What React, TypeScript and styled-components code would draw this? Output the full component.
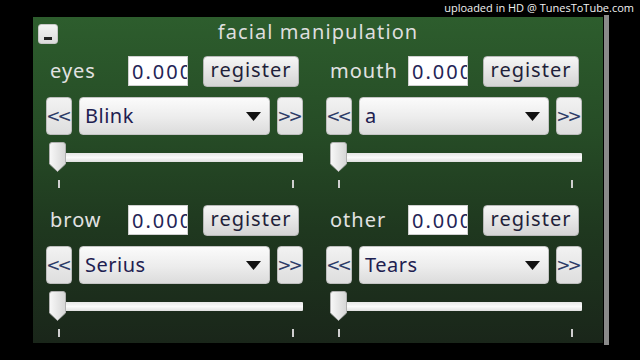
import React from 'react';
import styled, { createGlobalStyle } from 'styled-components';

const GlobalStyle = createGlobalStyle`
  html, body {
    margin: 0;
    padding: 0;
    background: #000;
  }
  body {
    font-family: "Noto Sans", "DejaVu Sans", sans-serif;
  }
`;

const Screen = styled.div`
  position: relative;
  width: 640px;
  height: 360px;
  background: #000;
  overflow: hidden;
  display: flex;
  align-items: flex-start;
  padding: 15px 0 0 33px;
  box-sizing: border-box;
`;

const Watermark = styled.div`
  position: absolute;
  top: 0;
  right: 6px;
  color: #f2f2f2;
  font-family: "Open Sans", "Noto Sans", sans-serif;
  font-size: 11px;
  line-height: 16px;
`;

const Panel = styled.div`
  margin-top: 2px;
  width: 570px;
  height: 326px;
  background: linear-gradient(#2d5d2d 0%, #264c26 35%, #1f381f 65%, #1a261a 100%);
  display: flex;
  flex-direction: column;
  box-sizing: border-box;
`;

const ScrollEdge = styled.div`
  width: 5px;
  height: 330px;
  margin-left: 1px;
  background: #8a8a8a;
`;

const TitleBar = styled.div`
  position: relative;
  height: 39px;
  display: flex;
  justify-content: center;
  align-items: flex-start;
`;

const Collapse = styled.button`
  position: absolute;
  left: 5px;
  top: 7px;
  width: 20px;
  height: 20px;
  padding: 0;
  border: 1px solid #c8c8c8;
  border-radius: 3px;
  background: linear-gradient(#f4f4f4, #dcdcdc);
  display: flex;
  justify-content: center;
  align-items: flex-start;

  &::after {
    content: '';
    margin-top: 12px;
    width: 8px;
    height: 3px;
    background: #222;
  }
`;

const Title = styled.div`
  margin-top: 2px;
  color: #dedede;
  font-size: 20px;
  line-height: 26px;
  letter-spacing: 1.1px;
`;

const Grid = styled.div`
  display: grid;
  grid-template-columns: 257px 256px;
  column-gap: 23px;
  row-gap: 17px;
  padding-left: 13px;
`;

const Section = styled.div`
  display: flex;
  flex-direction: column;
`;

const TopRow = styled.div`
  display: flex;
  align-items: center;
  height: 30px;
`;

const Label = styled.div`
  width: 78px;
  padding-left: 4px;
  color: #e2e2e2;
  font-size: 20px;
  line-height: 30px;
  letter-spacing: 1px;
`;

const ValueInput = styled.input`
  width: 60px;
  height: 30px;
  box-sizing: border-box;
  border: 1px solid #d0d0d0;
  background: #fff;
  color: #242456;
  font-family: "Noto Sans", "DejaVu Sans", sans-serif;
  font-size: 20px;
  letter-spacing: 2px;
  padding: 0 0 0 3px;
  outline: none;
`;

const RegisterButton = styled.button`
  margin-left: 15px;
  width: 96px;
  height: 31px;
  border: 1px solid #b8b8b8;
  border-radius: 4px;
  background: linear-gradient(#f6f6f6, #e2e2e2 60%, #d4d4d4);
  color: #1f1f3a;
  font-family: "Noto Sans", "DejaVu Sans", sans-serif;
  font-size: 20px;
  letter-spacing: 1px;
  line-height: 26px;
  padding: 0 0 2px;
`;

const ChooserRow = styled.div`
  margin-top: 11px;
  display: flex;
  gap: 7px;
  height: 38px;
`;

const StepButton = styled.button`
  width: 26px;
  height: 38px;
  padding: 0 3px 0 0;
  border: 1px solid #bdbdbd;
  border-radius: 4px;
  background: linear-gradient(#f2f2f2, #dedede);
  color: #2e3c68;
  font-family: "DejaVu Sans", sans-serif;
  font-size: 17px;
  letter-spacing: -3px;
  display: flex;
  justify-content: center;
  align-items: center;
`;

const Select = styled.div`
  flex: 1;
  height: 38px;
  box-sizing: border-box;
  border: 1px solid #c4c4c4;
  border-radius: 4px;
  background: linear-gradient(#fbfbfb, #ececec 55%, #dcdcdc);
  display: flex;
  align-items: center;
  padding: 0 8px 0 5px;
`;

const SelectText = styled.span`
  flex: 1;
  color: #1e2050;
  font-size: 20px;
  letter-spacing: 0.5px;
  line-height: 26px;
`;

const Caret = styled.svg`
  width: 15px;
  height: 9px;
`;

const Slider = styled.div`
  position: relative;
  margin-top: 7px;
  height: 30px;
`;

const Track = styled.div`
  position: absolute;
  left: 6px;
  right: 0;
  top: 11px;
  height: 9px;
  background: linear-gradient(#e6e6e6, #fafafa 50%, #e0e0e0);
  border-radius: 1px;
`;

const Thumb = styled.svg<{ $left: number }>`
  position: absolute;
  left: ${(p) => p.$left}px;
  top: 0;
  width: 17px;
  height: 30px;
`;

const Ticks = styled.div`
  margin-top: 8px;
  display: flex;
  justify-content: space-between;
  padding: 0 9px 0 12px;
  height: 8px;
`;

const Tick = styled.div`
  width: 2px;
  height: 8px;
  background: #cfcfcf;
`;

type Control = { label: string; choice: string; thumb: number };

const controls: Control[] = [
  { label: 'eyes', choice: 'Blink', thumb: 3 },
  { label: 'mouth', choice: 'a', thumb: 4 },
  { label: 'brow', choice: 'Serius', thumb: 3 },
  { label: 'other', choice: 'Tears', thumb: 4 },
];

const ControlBlock: React.FC<{ c: Control }> = ({ c }) => (
  <Section>
    <TopRow>
      <Label>{c.label}</Label>
      <ValueInput readOnly value="0.000000" />
      <RegisterButton>register</RegisterButton>
    </TopRow>
    <ChooserRow>
      <StepButton>&lt;&lt;</StepButton>
      <Select>
        <SelectText>{c.choice}</SelectText>
        <Caret viewBox="0 0 15 9">
          <path d="M0 0 H15 L7.5 9 Z" fill="#111" />
        </Caret>
      </Select>
      <StepButton>&gt;&gt;</StepButton>
    </ChooserRow>
    <Slider>
      <Track />
      <Thumb $left={c.thumb} viewBox="0 0 17 30">
        <defs>
          <linearGradient id="thumbFill" x1="0" x2="1" y1="0" y2="0">
            <stop offset="0" stopColor="#f8f8f8" />
            <stop offset="1" stopColor="#d6d6d6" />
          </linearGradient>
        </defs>
        <path
          d="M3 0.5 H14 Q16.5 0.5 16.5 3 V22 L8.5 29.5 L0.5 22 V3 Q0.5 0.5 3 0.5 Z"
          fill="url(#thumbFill)"
          stroke="#b0b0b0"
          strokeWidth="1"
        />
      </Thumb>
    </Slider>
    <Ticks>
      <Tick />
      <Tick />
    </Ticks>
  </Section>
);

const App: React.FC = () => {
  return (
    <Screen>
      <GlobalStyle />
      <Panel>
        <TitleBar>
          <Collapse aria-label="collapse" />
          <Title>facial manipulation</Title>
        </TitleBar>
        <Grid>
          {controls.map((c) => (
            <ControlBlock key={c.label} c={c} />
          ))}
        </Grid>
      </Panel>
      <ScrollEdge />
      <Watermark>uploaded in HD @ TunesToTube.com</Watermark>
    </Screen>
  );
};

export default App;
